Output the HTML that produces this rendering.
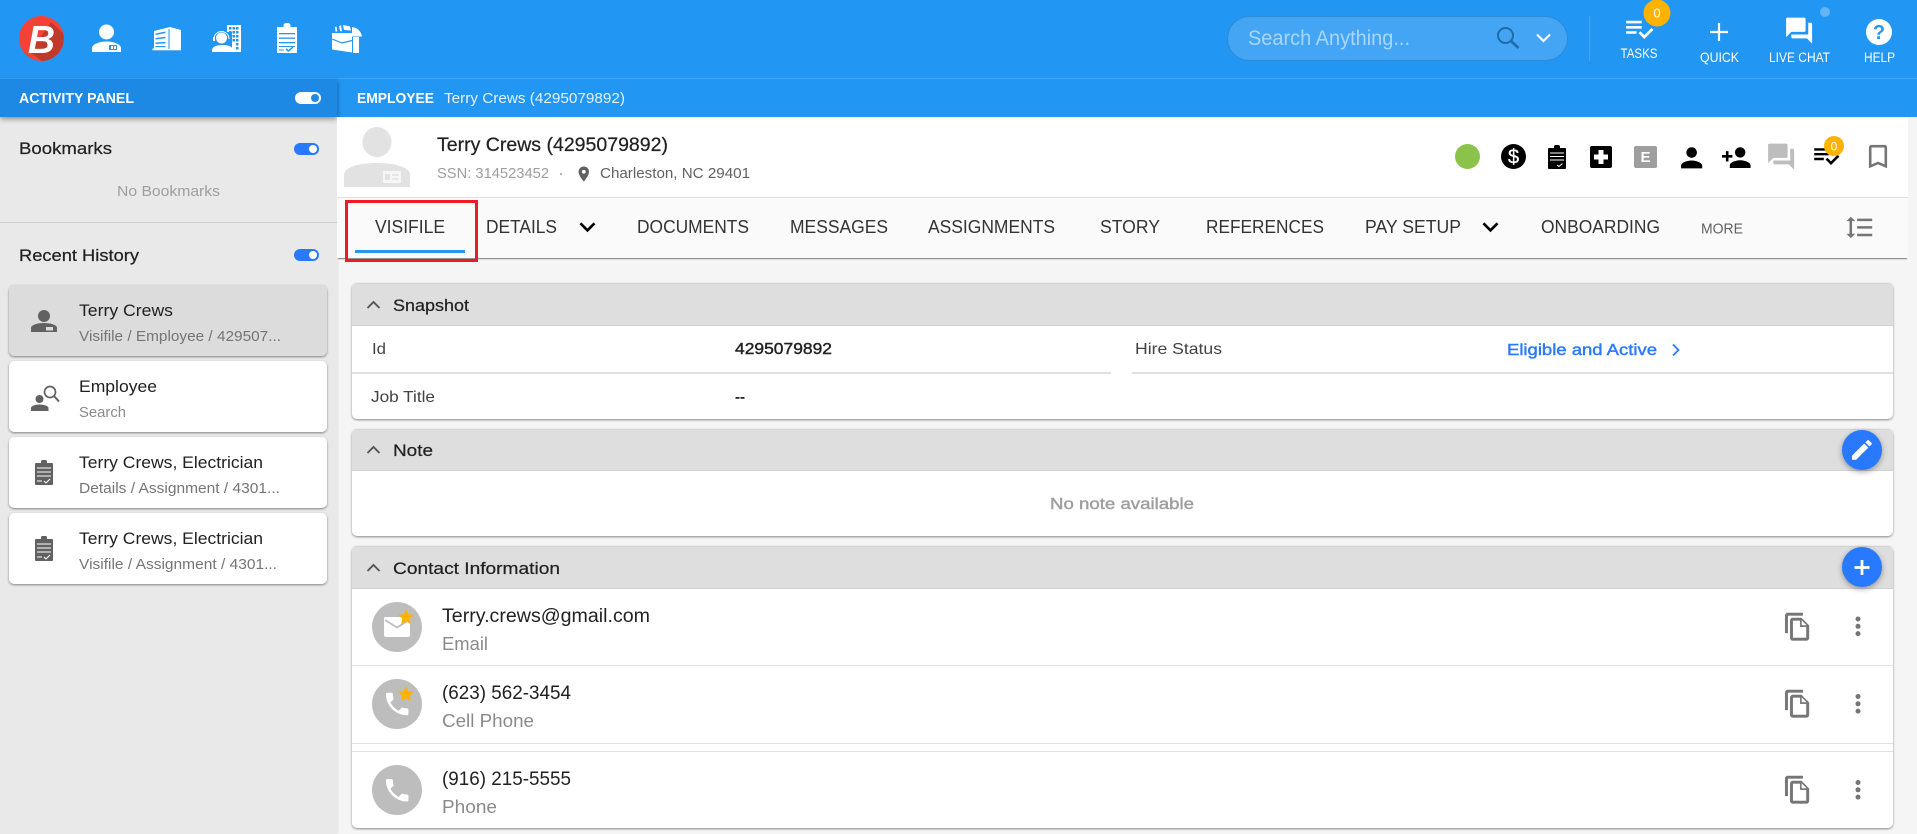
<!DOCTYPE html>
<html lang="en"><head><meta charset="utf-8"><title>Employee - Terry Crews</title>
<style>
html,body{margin:0;padding:0;width:1917px;height:834px;overflow:hidden;background:#f5f5f5;font-family:"Liberation Sans",sans-serif}
.a{position:absolute;box-sizing:border-box}
.panel{left:352px;width:1541px;background:#fff;border-radius:5px;box-shadow:0 1px 2px rgba(0,0,0,.45);overflow:hidden}
.ph{left:0;top:0;width:100%;background:#dedede;border-bottom:1px solid #d2d2d2;border-top:1px solid #d4d4d4}
.card{left:9px;width:318px;height:71px;background:#fff;border-radius:5px;box-shadow:0 1px 2px rgba(0,0,0,.45)}
.ln{height:1px;background:#e0e0e0}
.fab{width:40px;height:40px;left:1842px;border-radius:50%;background:#2979ff;box-shadow:0 2px 6px rgba(0,0,0,.35)}
svg{position:absolute;left:0;top:0}
text{font-family:"Liberation Sans",sans-serif}
.m{stroke-width:.22}
.s{stroke-width:.42}
</style></head><body>
<div class="a" style="left:0;top:0;width:1917px;height:117px;background:#2196f3"></div>
<div class="a" style="left:0;top:78px;width:1917px;height:1px;background:#42a5f5"></div>
<div class="a" style="left:0;top:117px;width:337px;height:717px;background:#e9e9e9;box-shadow:1px 0 2px rgba(0,0,0,.08)"></div>
<div class="a" style="left:0;top:79px;width:337px;height:38px;background:#1e88e5;box-shadow:0 2px 5px rgba(0,0,0,.4)"></div>
<div class="a" style="left:0;top:222px;width:337px;height:1px;background:#cfcfcf"></div>
<div class="a" style="left:1227px;top:16px;width:341px;height:45px;border-radius:23px;background:#45a5f5;border:1px solid #2f8ad6"></div>
<div class="a" style="left:1589px;top:16px;width:1px;height:45px;background:#42a5f5"></div>

<div class="a" style="left:337px;top:117px;width:1571px;height:80px;background:#fff"></div>
<div class="a" style="left:337px;top:197px;width:1571px;height:61px;background:#fafafa;border-top:1px solid #e0e0e0;box-shadow:0 2px 1px -1px rgba(0,0,0,.5)"></div>
<div class="a" style="left:345px;top:200px;width:133px;height:62px;border:3px solid #ed1c24"></div>
<div class="a" style="left:355px;top:250px;width:110px;height:3px;background:#2196f3"></div>

<div class="a card" style="top:285px;background:#dcdcdc"></div>
<div class="a card" style="top:361px"></div>
<div class="a card" style="top:437px"></div>
<div class="a card" style="top:513px"></div>

<div class="a panel" style="top:283px;height:136px"><div class="a ph" style="height:43px"></div>
<div class="a" style="left:0;top:89px;width:759px;height:2px;background:#e0e0e0"></div>
<div class="a" style="left:780px;top:89px;width:761px;height:2px;background:#e0e0e0"></div></div>
<div class="a panel" style="top:429px;height:107px"><div class="a ph" style="height:42px"></div></div>
<div class="a panel" style="top:546px;height:282px"><div class="a ph" style="height:43px"></div>
<div class="a ln" style="left:0;top:119px;width:100%"></div>
<div class="a ln" style="left:0;top:197px;width:100%"></div>
<div class="a ln" style="left:0;top:205px;width:100%"></div></div>
<div class="a fab" style="top:430px"></div>
<div class="a fab" style="top:547px"></div>

<svg width="1917" height="834" viewBox="0 0 1917 834" xmlns="http://www.w3.org/2000/svg">
<defs>
<path id="chev" d="M16.590 8.590L12 13.170 7.410 8.590 6 10l6 6 6-6z"/>
<path id="copy" d="M16 1H4c-1.100 0-2 .9-2 2v14h2V3h12V1zm-1 4H8c-1.100 0-1.990.9-1.990 2L6 21c0 1.100.89 2 1.990 2H19c1.100 0 2-.9 2-2V11l-6-6zM8 21V7h6v5h5v9H8zM15 6.500L19.500 11H15z"/>
<path id="phone" d="M6.620 10.790c1.440 2.830 3.760 5.140 6.590 6.590l2.200-2.200c.27-.27.67-.36 1.020-.24 1.120.37 2.330.57 3.570.57.55 0 1 .45 1 1V20c0 .55-.45 1-1 1-9.390 0-17-7.610-17-17 0-.55.45-1 1-1h3.500c.55 0 1 .45 1 1 0 1.250.2 2.450.57 3.570.11.35.03.74-.25 1.020l-2.200 2.200z"/>
<path id="star" d="M12 17.270L18.180 21l-1.640-7.030L22 9.240l-7.190-.61L12 2 9.190 8.630 2 9.240l5.460 4.730L5.820 21z"/>
<path id="tasks" d="M14 10H2v2h12v-2zm0-4H2v2h12V6zM2 16h8v-2H2v2zm19.500-4.500L23 13l-6.990 7-4.510-4.500L13 14l3.010 3 5.490-5.500z"/>
<path id="forum" d="M21 6h-2v9H6v2c0 .55.45 1 1 1h11l4 4V7c0-.55-.45-1-1-1zm-4 6V3c0-.55-.45-1-1-1H3c-.55 0-1 .45-1 1v14l4-4h10c.55 0 1-.45 1-1z"/>
<g id="clip"><rect x="0" y="4" width="18" height="22" rx="1"/><rect x="6" y="1" width="6" height="4" rx="1.500"/></g>
<g id="dots"><circle cx="0" cy="0" r="2.500"/><circle cx="0" cy="7.300" r="2.500"/><circle cx="0" cy="14.600" r="2.500"/></g>
</defs>

<!-- logo -->
<ellipse cx="41.500" cy="38.500" rx="22.500" ry="22.500" fill="#f44336"/>
<path d="M51 22 L63 33 A22.500 22.500 0 0 1 42 61 L30 52z" fill="#c0392b"/>
<text x="28" y="53" font-size="39" font-weight="700" font-style="italic" fill="#fff" textLength="27" lengthAdjust="spacingAndGlyphs">B</text>

<!-- nav: person -->
<g fill="#fff"><circle cx="106.500" cy="32" r="7.500"/>
<path d="M92 52v-4c0-3.500 7-6.500 14.500-6.500S121 44.500 121 48v4z"/>
<rect x="109" y="45" width="8" height="5" fill="#2196f3"/><rect x="111" y="46" width="2" height="3" fill="#fff"/><rect x="114" y="46" width="2" height="3" fill="#fff"/></g>
<!-- nav: building -->
<g fill="#fff"><path d="M154 31l16-4 11 3v19h-27z"/><rect x="152.500" y="48.500" width="28.500" height="1.800"/>
<g fill="#2196f3"><path d="M155.500 33.500l10-2v1.500l-10 2z"/><path d="M155.500 38l10-1.300v1.500l-10 1.300z"/><path d="M155.500 42.500l10-.6v1.500l-10 .6z"/><path d="M155.500 46h10v1.200h-10z"/><rect x="168.500" y="29" width="1" height="20"/></g></g>
<!-- nav: agent -->
<g fill="#fff"><rect x="227" y="25" width="14" height="27"/>
<g fill="#2196f3"><rect x="229" y="27" width="2.500" height="2.500"/><rect x="232.500" y="27" width="2.500" height="2.500"/><rect x="236" y="27" width="2.500" height="2.500"/><rect x="229" y="31" width="2.500" height="2.500"/><rect x="232.500" y="31" width="2.500" height="2.500"/><rect x="236" y="31" width="2.500" height="2.500"/><rect x="232.500" y="35" width="2.500" height="2.500"/><rect x="236" y="35" width="2.500" height="2.500"/><rect x="232.500" y="39" width="2.500" height="2.500"/><rect x="236" y="39" width="2.500" height="2.500"/><rect x="236" y="43" width="2.500" height="2.500"/><rect x="236" y="47" width="2.500" height="2.500"/><rect x="225" y="32" width="7" height="20"/></g>
<circle cx="221.500" cy="38" r="5.500"/><path d="M214 39a7.500 7.500 0 0 1 15 0" fill="none" stroke="#fff"/><rect x="213" y="37" width="2" height="4"/>
<path d="M212 52v-2c0-3 4-5 10.500-5s10.500 2 10.500 5v2z"/></g>
<!-- nav: clipboard -->
<g fill="#fff"><rect x="277" y="27" width="20" height="26"/><rect x="283.500" y="23" width="7" height="6" rx="2.500"/>
<g fill="#2196f3"><rect x="279" y="33" width="16" height="1.300"/><rect x="279" y="37.500" width="16" height="1.300"/><rect x="279" y="42" width="16" height="1.300"/><rect x="279" y="46" width="16" height="1"/><rect x="279" y="49.500" width="5" height="1"/></g>
<path d="M286 49l2.500 2 4.500-4" fill="none" stroke="#2196f3" stroke-width="1.500"/></g>
<!-- nav: briefcase -->
<g fill="#fff"><path d="M335 27l1.500-.5 .8 5h-1.800zM339 26l2-.8 1 6h-2zM343 25l7 1.500 1 4-7-.5z"/><path d="M352 27c5 .5 9 4 10 9.500h-10z"/>
<path d="M332 33h20v19.500l-20-3z"/><path d="M353 37h6v16h-6z"/>
<path d="M332 39l10 4 10-2.500" fill="none" stroke="#2196f3" stroke-width="1.200"/></g>

<!-- search -->
<text x="1248" y="45" font-size="21" fill="#a9d6fa" textLength="162" lengthAdjust="spacingAndGlyphs">Search Anything...</text>
<circle cx="1505.500" cy="35.500" r="7.500" fill="none" stroke="#1f6ba8" stroke-width="2"/><path d="M1511 41l7.500 7" stroke="#1f6ba8" stroke-width="2.600"/>
<path d="M1537 34.500l6.500 6.500 6.500-6.500" fill="none" stroke="#fff" stroke-width="2.200"/>

<!-- top right -->
<use href="#tasks" transform="translate(1623.500 13) scale(1.300)" fill="#fff"/>
<circle cx="1657" cy="13" r="13.500" fill="#ffb300"/>
<text x="1657" y="17.500" font-size="13" fill="#fff" text-anchor="middle">0</text>
<text x="1620.500" y="58" font-size="14" fill="#fff" textLength="37" lengthAdjust="spacingAndGlyphs">TASKS</text>
<path d="M1710 32h18M1719 23v18" stroke="#fff" stroke-width="2.200"/>
<text x="1700" y="62" font-size="14" fill="#fff" textLength="39" lengthAdjust="spacingAndGlyphs">QUICK</text>
<use href="#forum" transform="translate(1783.500 15) scale(1.300)" fill="#fff"/>
<circle cx="1825" cy="12" r="5" fill="#64b5f6"/>
<text x="1769" y="62" font-size="14" fill="#fff" textLength="61" lengthAdjust="spacingAndGlyphs">LIVE CHAT</text>
<circle cx="1879" cy="32" r="13" fill="#fff"/>
<text x="1879" y="39" font-size="20" font-weight="700" fill="#2196f3" text-anchor="middle">?</text>
<text x="1864" y="62" font-size="14" fill="#fff" textLength="31" lengthAdjust="spacingAndGlyphs">HELP</text>

<!-- second bar -->
<text x="19" y="103" font-size="15" font-weight="700" fill="#fff" textLength="115" lengthAdjust="spacingAndGlyphs">ACTIVITY PANEL</text>
<rect x="295" y="92" width="26" height="12" rx="6" fill="#fff"/><circle cx="315" cy="98" r="4" fill="#1e88e5"/>
<text x="357" y="103" font-size="15" font-weight="700" fill="#fff" textLength="77" lengthAdjust="spacingAndGlyphs">EMPLOYEE</text>
<text x="444" y="103" font-size="15" fill="#e3f2fd" textLength="181" lengthAdjust="spacingAndGlyphs">Terry Crews (4295079892)</text>

<!-- sidebar -->
<text x="19" y="154" font-size="17" fill="#212121" stroke="#212121" class="m" textLength="93" lengthAdjust="spacingAndGlyphs">Bookmarks</text>
<rect x="294" y="143" width="25" height="12" rx="6" fill="#2979ff"/><circle cx="313" cy="149" r="4" fill="#fff"/>
<text x="117" y="196" font-size="15" fill="#9e9e9e" textLength="103" lengthAdjust="spacingAndGlyphs">No Bookmarks</text>
<text x="19" y="261" font-size="17" fill="#212121" stroke="#212121" class="m" textLength="120" lengthAdjust="spacingAndGlyphs">Recent History</text>
<rect x="294" y="249" width="25" height="12" rx="6" fill="#2979ff"/><circle cx="313" cy="255" r="4" fill="#fff"/>

<!-- card icons -->
<g fill="#616161"><circle cx="44" cy="316" r="6"/><path d="M31 332v-4c0-3 6-5 13-5s13 2 13 5v4z"/><rect x="46" y="327" width="7" height="3.500" fill="#dcdcdc"/></g>
<g fill="#616161"><circle cx="39.500" cy="399" r="4"/><path d="M31 411v-3c0-2 4-3.500 8.500-3.500s9 1.500 9 3.500v3z"/>
<circle cx="50" cy="392" r="5.500" fill="none" stroke="#616161" stroke-width="1.700"/><path d="M54 396l5 5.500" stroke="#616161" stroke-width="2"/></g>
<use href="#clip" transform="translate(35 459)" fill="#616161"/>
<g stroke="#fff" stroke-width="1.100" fill="none"><path d="M37 468h14M37 472h14M37 476h14M37 481h5M44 481l2 2 4-4"/></g>
<use href="#clip" transform="translate(35 535)" fill="#616161"/>
<g stroke="#fff" stroke-width="1.100" fill="none"><path d="M37 544h14M37 548h14M37 552h14M37 557h5M44 557l2 2 4-4"/></g>

<!-- card text -->
<text x="79" y="316" font-size="17" fill="#212121" textLength="94" lengthAdjust="spacingAndGlyphs">Terry Crews</text>
<text x="79" y="341" font-size="15" fill="#757575" textLength="202" lengthAdjust="spacingAndGlyphs">Visifile / Employee / 429507...</text>
<text x="79" y="392" font-size="17" fill="#212121" textLength="78" lengthAdjust="spacingAndGlyphs">Employee</text>
<text x="79" y="417" font-size="15" fill="#8a8a8a" textLength="47" lengthAdjust="spacingAndGlyphs">Search</text>
<text x="79" y="468" font-size="17" fill="#212121" textLength="184" lengthAdjust="spacingAndGlyphs">Terry Crews, Electrician</text>
<text x="79" y="493" font-size="15" fill="#757575" textLength="201" lengthAdjust="spacingAndGlyphs">Details / Assignment / 4301...</text>
<text x="79" y="544" font-size="17" fill="#212121" textLength="184" lengthAdjust="spacingAndGlyphs">Terry Crews, Electrician</text>
<text x="79" y="569" font-size="15" fill="#757575" textLength="198" lengthAdjust="spacingAndGlyphs">Visifile / Assignment / 4301...</text>

<!-- avatar -->
<g fill="#e2e2e2"><ellipse cx="377" cy="142" rx="14.500" ry="15"/><path d="M344 187v-12c0-8 15-12 33-12s33 4 33 12v12z"/></g>
<rect x="383" y="171" width="18" height="12" fill="#f6f6f6"/><rect x="385" y="174" width="5" height="6" fill="#e2e2e2"/><path d="M392 175h7M392 179h7" stroke="#e2e2e2" stroke-width="1.500"/>
<!-- employee info -->
<text x="437" y="151" font-size="19" fill="#212121" stroke="#212121" class="m" textLength="231" lengthAdjust="spacingAndGlyphs">Terry Crews (4295079892)</text>
<text x="437" y="178" font-size="15" fill="#9e9e9e" textLength="112" lengthAdjust="spacingAndGlyphs">SSN: 314523452</text>
<circle cx="561" cy="174" r="1" fill="#9e9e9e"/>
<path transform="translate(574.800 165) scale(.75)" fill="#616161" d="M12 2C8.130 2 5 5.130 5 9c0 5.250 7 13 7 13s7-7.750 7-13c0-3.870-3.130-7-7-7zm0 9.500a2.500 2.500 0 010-5 2.500 2.500 0 010 5z"/>
<text x="600" y="178" font-size="15" fill="#616161" textLength="150" lengthAdjust="spacingAndGlyphs">Charleston, NC 29401</text>

<!-- status icons -->
<circle cx="1467.500" cy="156.500" r="12.500" fill="#8bc34a"/>
<circle cx="1513.500" cy="156.500" r="12.500" fill="#000"/>
<text x="1513.500" y="163.500" font-size="20" fill="#fff" stroke="#fff" stroke-width=".3" text-anchor="middle">$</text>
<g><rect x="1548" y="148" width="18" height="21" rx="1" fill="#000"/><rect x="1554" y="145" width="6" height="5" rx="2" fill="#000"/><path d="M1550 153h14M1550 156.500h14M1550 160h14" stroke="#fff" stroke-width=".9"/><path d="M1557 165l2 1.500 3.500-3" stroke="#fff" fill="none"/></g>
<rect x="1590" y="146" width="22" height="22" rx="2" fill="#000"/><path d="M1601 150v14M1594 157h14" stroke="#fff" stroke-width="5"/>
<rect x="1634" y="146" width="23" height="22" rx="2" fill="#9e9e9e"/>
<text x="1645.500" y="162" font-size="15" font-weight="700" fill="#fff" text-anchor="middle">E</text>
<path transform="translate(1675.800 142) scale(1.320)" fill="#000" d="M12 12c2.210 0 4-1.790 4-4s-1.790-4-4-4-4 1.790-4 4 1.790 4 4 4zm0 2c-2.670 0-8 1.340-8 4v2h16v-2c0-2.660-5.330-4-8-4z"/>
<path transform="translate(1720.700 142) scale(1.300)" fill="#000" d="M15 12c2.210 0 4-1.790 4-4s-1.790-4-4-4-4 1.790-4 4 1.790 4 4 4zm-9-2V7H4v3H1v2h3v3h2v-3h3v-2H6zm9 4c-2.670 0-8 1.340-8 4v2h16v-2c0-2.660-5.330-4-8-4z"/>
<use href="#forum" transform="translate(1765.500 141) scale(1.300)" fill="#bdbdbd"/>
<use href="#tasks" transform="translate(1811.800 141) scale(1.200)" fill="#000"/>
<circle cx="1834" cy="146" r="10" fill="#ffb300"/>
<text x="1834" y="150.500" font-size="12" fill="#fff" text-anchor="middle">0</text>
<path transform="translate(1862.400 141) scale(1.300)" fill="#757575" d="M17 3H7c-1.100 0-2 .9-2 2v16l7-3 7 3V5c0-1.100-.9-2-2-2zm0 15l-5-2.180L7 18V5h10v13z"/>

<!-- tabs -->
<g font-size="18" fill="#333">
<text x="375" y="233" textLength="70" lengthAdjust="spacingAndGlyphs">VISIFILE</text>
<text x="486" y="233" textLength="71" lengthAdjust="spacingAndGlyphs">DETAILS</text>
<text x="637" y="233" textLength="112" lengthAdjust="spacingAndGlyphs">DOCUMENTS</text>
<text x="790" y="233" textLength="98" lengthAdjust="spacingAndGlyphs">MESSAGES</text>
<text x="928" y="233" textLength="127" lengthAdjust="spacingAndGlyphs">ASSIGNMENTS</text>
<text x="1100" y="233" textLength="60" lengthAdjust="spacingAndGlyphs">STORY</text>
<text x="1206" y="233" textLength="118" lengthAdjust="spacingAndGlyphs">REFERENCES</text>
<text x="1365" y="233" textLength="96" lengthAdjust="spacingAndGlyphs">PAY SETUP</text>
<text x="1541" y="233" textLength="119" lengthAdjust="spacingAndGlyphs">ONBOARDING</text>
</g>
<text x="1701" y="233.500" font-size="15" fill="#616161" textLength="42" lengthAdjust="spacingAndGlyphs">MORE</text>
<use href="#chev" transform="translate(571.500 211) scale(1.330)" fill="#000"/>
<use href="#chev" transform="translate(1474.500 211) scale(1.330)" fill="#000"/>
<path transform="translate(1844.500 212.300) scale(1.260)" fill="#757575" d="M6 7h2.500L5 3.500 1.500 7H4v10H1.500L5 20.500 8.500 17H6V7zm4-2v2h12V5H10zm0 14h12v-2H10v2zm0-6h12v-2H10v2z"/>

<!-- panel headers -->
<g fill="none" stroke="#555" stroke-width="1.900"><path d="M367.500 308l6-6 6 6"/><path d="M367.500 453l6-6 6 6"/><path d="M367.500 571l6-6 6 6"/></g>
<text x="393" y="311" font-size="17" fill="#212121" stroke="#212121" class="m" textLength="76" lengthAdjust="spacingAndGlyphs">Snapshot</text>
<text x="393" y="456" font-size="17" fill="#212121" stroke="#212121" class="m" textLength="40" lengthAdjust="spacingAndGlyphs">Note</text>
<text x="393" y="574" font-size="17" fill="#212121" stroke="#212121" class="m" textLength="167" lengthAdjust="spacingAndGlyphs">Contact Information</text>

<!-- snapshot -->
<text x="372" y="354" font-size="16" fill="#424242" textLength="14" lengthAdjust="spacingAndGlyphs">Id</text>
<text x="371" y="402" font-size="16" fill="#424242" textLength="64" lengthAdjust="spacingAndGlyphs">Job Title</text>
<text x="735" y="354" font-size="16" fill="#212121" stroke="#212121" class="s" textLength="97" lengthAdjust="spacingAndGlyphs">4295079892</text>
<text x="735" y="402" font-size="16" fill="#212121" stroke="#212121" class="s" textLength="10" lengthAdjust="spacingAndGlyphs">--</text>
<text x="1135" y="354" font-size="16" fill="#424242" textLength="87" lengthAdjust="spacingAndGlyphs">Hire Status</text>
<text x="1507" y="355" font-size="16" fill="#2979ff" stroke="#2979ff" class="s" textLength="150" lengthAdjust="spacingAndGlyphs">Eligible and Active</text>
<path d="M1673 344.500l5.500 5.500-5.500 5.500" fill="none" stroke="#2979ff" stroke-width="1.800"/>
<text x="1050" y="509" font-size="16" fill="#9e9e9e" stroke="#9e9e9e" class="s" textLength="144" lengthAdjust="spacingAndGlyphs">No note available</text>

<!-- FAB icons -->
<path transform="translate(1848.700 436.700) scale(1.100)" fill="#fff" d="M3 17.250V21h3.750L17.810 9.940l-3.750-3.750L3 17.250zM20.710 7.040c.39-.39.39-1.020 0-1.410l-2.340-2.340c-.39-.39-1.020-.39-1.410 0l-1.830 1.830 3.750 3.750 1.830-1.830z"/>
<path d="M1854.500 567.500h15M1862 560v15" stroke="#fff" stroke-width="2.800"/>

<!-- contacts -->
<circle cx="397" cy="627" r="25" fill="#bdbdbd"/><circle cx="397" cy="704" r="25" fill="#bdbdbd"/><circle cx="397" cy="790" r="25" fill="#bdbdbd"/>
<path d="M385.500 617h23c1 0 1.500 1 1.500 2v16c0 1-.5 2-2 2h-22c-1.500 0-2-1-2-2v-16c0-1 .5-2 1.500-2z" fill="#fff"/>
<path d="M385 620l12 7.500 12-7.500" fill="none" stroke="#bdbdbd" stroke-width="1.700"/>
<use href="#star" transform="translate(396.400 607.400) scale(.8)" fill="#ffb300"/>
<use href="#phone" transform="translate(382.200 689) scale(1.250)" fill="#fff"/>
<use href="#star" transform="translate(396.400 684.400) scale(.8)" fill="#ffb300"/>
<use href="#phone" transform="translate(382.200 775.200) scale(1.250)" fill="#fff"/>

<text x="442" y="622" font-size="19" fill="#212121" textLength="208" lengthAdjust="spacingAndGlyphs">Terry.crews@gmail.com</text>
<text x="442" y="650" font-size="18" fill="#8a8a8a" textLength="46" lengthAdjust="spacingAndGlyphs">Email</text>
<text x="442" y="699" font-size="19" fill="#212121" textLength="129" lengthAdjust="spacingAndGlyphs">(623) 562-3454</text>
<text x="442" y="727" font-size="18" fill="#8a8a8a" textLength="92" lengthAdjust="spacingAndGlyphs">Cell Phone</text>
<text x="442" y="785" font-size="19" fill="#212121" textLength="129" lengthAdjust="spacingAndGlyphs">(916) 215-5555</text>
<text x="442" y="813" font-size="18" fill="#8a8a8a" textLength="55" lengthAdjust="spacingAndGlyphs">Phone</text>

<g fill="#757575" stroke="#757575" stroke-width=".35">
<use href="#copy" transform="translate(1782.700 611.700) scale(1.250)"/>
<use href="#copy" transform="translate(1782.700 688.700) scale(1.250)"/>
<use href="#copy" transform="translate(1782.700 774.700) scale(1.250)"/>
</g>
<g fill="#757575">
<use href="#dots" transform="translate(1858 619)"/>
<use href="#dots" transform="translate(1858 696.500)"/>
<use href="#dots" transform="translate(1858 782.500)"/>
</g>
</svg>
</body></html>
